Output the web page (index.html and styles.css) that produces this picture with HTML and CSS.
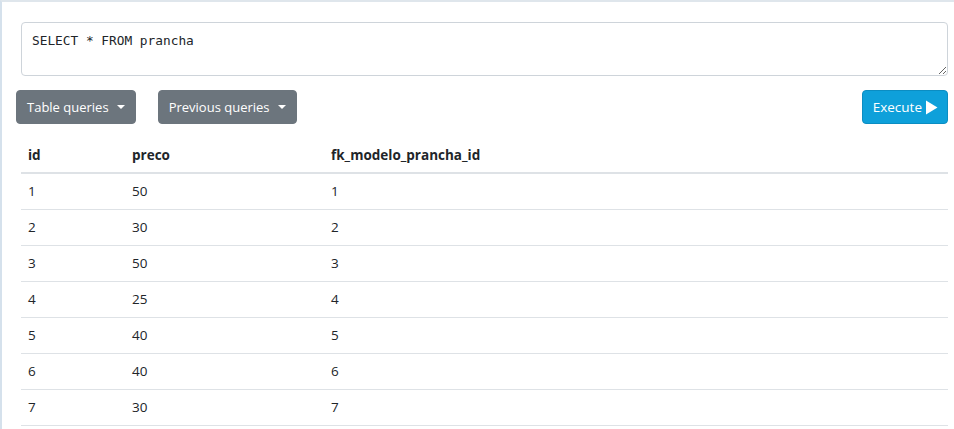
FILE: index.html
```html
<!DOCTYPE html>
<html>
<head>
<meta charset="utf-8">
<link rel="stylesheet" href="styles.css">
</head>
<body>
<div class="panel">
  <textarea class="query" spellcheck="false">SELECT * FROM prancha</textarea>
  <div class="toolbar">
    <div class="left-group">
      <button class="btn btn-gray">Table queries <span class="caret"></span></button>
      <button class="btn btn-gray">Previous queries <span class="caret"></span></button>
    </div>
    <button class="btn btn-info">Execute <svg class="play" width="13" height="15" viewBox="0 0 13 15"><path d="M1 0.5 L12.5 7.5 L1 14.5 Z" fill="#fff"/></svg></button>
  </div>
  <table class="results">
    <thead>
      <tr><th class="c1">id</th><th class="c2">preco</th><th>fk_modelo_prancha_id</th></tr>
    </thead>
    <tbody>
      <tr><td>1</td><td>50</td><td>1</td></tr>
      <tr><td>2</td><td>30</td><td>2</td></tr>
      <tr><td>3</td><td>50</td><td>3</td></tr>
      <tr><td>4</td><td>25</td><td>4</td></tr>
      <tr><td>5</td><td>40</td><td>5</td></tr>
      <tr><td>6</td><td>40</td><td>6</td></tr>
      <tr><td>7</td><td>30</td><td>7</td></tr>
    </tbody>
  </table>
</div>
</body>
</html>
```
FILE: styles.css
```css
html, body {
  margin: 0;
  padding: 0;
  background: #fff;
}
body {
  font-family: "Open Sans", "Noto Sans", sans-serif;
  color: #212529;
  overflow: hidden;
}
.panel {
  border-left: 2px solid #d5e1ec;
  border-top: 2px solid #dfe6ec;
  padding: 20px 6px 0 19px;
  min-height: 429px;
  box-sizing: border-box;
}
.query {
  display: block;
  box-sizing: border-box;
  width: 927px;
  height: 54px;
  margin: 0;
  border: 1px solid #ced4da;
  border-radius: 4px;
  padding: 9px 10px;
  font-family: "DejaVu Sans Mono", "Liberation Mono", monospace;
  font-size: 12.8px;
  line-height: 17px;
  color: #212529;
  resize: vertical;
  outline: none;
}
.toolbar {
  display: flex;
  justify-content: space-between;
  align-items: center;
  margin: 14px 0 0 -5px;
  width: 932px;
}
.left-group {
  display: flex;
  gap: 22px;
}
.btn {
  display: inline-flex;
  align-items: center;
  height: 34px;
  box-sizing: border-box;
  border-radius: 4px;
  font-family: "Open Sans", "Noto Sans", sans-serif;
  font-size: 13px;
  color: #fff;
  padding: 0 10px;
  cursor: pointer;
}
.btn-gray {
  background: #6c757d;
  border: 1px solid #6c757d;
}
.btn-info {
  background: #0ea0da;
  border: 1px solid #0b8dc2;
  padding: 0 9px 0 10px;
  gap: 3px;
  font-size: 13.5px;
}
.caret {
  display: inline-block;
  margin-left: 8px;
  width: 0;
  height: 0;
  border-left: 4px solid transparent;
  border-right: 4px solid transparent;
  border-top: 4px solid #fff;
}
.play {
  display: block;
}
.results {
  border-collapse: collapse;
  width: 927px;
  margin-top: 13px;
  font-size: 13.5px;
}
.results th, .results td {
  text-align: left;
  padding: 0 7px;
  height: 36px;
  box-sizing: border-box;
  border-bottom: 1px solid #dee2e6;
  vertical-align: middle;
}
.results th {
  font-weight: 700;
  height: 36px;
  border-bottom: 2px solid #dee2e6;
}
.results .c1 { width: 104px; }
.results .c2 { width: 199px; }
```
